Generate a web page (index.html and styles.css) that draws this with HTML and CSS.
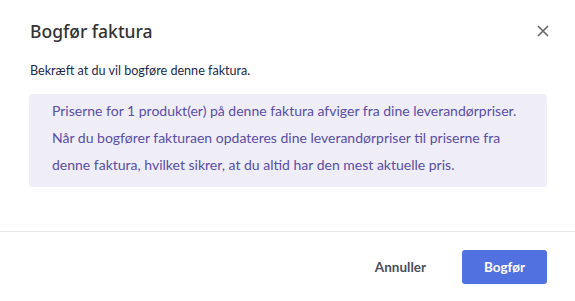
FILE: index.html
```html
<!DOCTYPE html>
<html lang="da">
<head>
<meta charset="utf-8">
<link rel="stylesheet" href="styles.css">
</head>
<body>
<div class="dialog">
  <div class="header">
    <h1 class="title">Bogfør faktura</h1>
    <button class="close" aria-label="Luk">
      <svg width="12" height="12" viewBox="0 0 12 12"><path d="M1 1L11 11M11 1L1 11" stroke="#666" stroke-width="1.6" fill="none"/></svg>
    </button>
  </div>
  <div class="body">
    <p class="lead">Bekræft at du vil bogføre denne faktura.</p>
    <div class="notice">
      Priserne for 1 produkt(er) på denne faktura afviger fra dine leverandørpriser.<br>
      Når du bogfører fakturaen opdateres dine leverandørpriser til priserne fra<br>
      denne faktura, hvilket sikrer, at du altid har den mest aktuelle pris.
    </div>
  </div>
  <div class="footer">
    <button class="btn btn-text">Annuller</button>
    <button class="btn btn-primary">Bogfør</button>
  </div>
</div>
</body>
</html>
```

FILE: styles.css
```css
* { box-sizing: border-box; }
html, body { margin: 0; padding: 0; background: #fff; }
body { font-family: "Lato", "Noto Sans", sans-serif; }
.dialog { width: 575px; height: 301px; display: flex; flex-direction: column; }
.header { display: flex; align-items: center; justify-content: space-between; padding: 18px 26px 0 30px; height: 44px; }
.title { margin: 0; font-family: "Noto Sans", sans-serif; font-size: 17.5px; font-weight: 500; color: #333; line-height: 24px; }
.close { background: none; border: 0; padding: 0; width: 12px; height: 12px; display: flex; cursor: pointer; }
.body { padding: 18px 28px 0 29px; flex: 1; }
.lead { margin: 0 0 14px 1px; font-size: 12.6px; color: #1d2a4d; line-height: 18px; }
.notice { background: #efedf8; border-radius: 4px; padding: 3px 10px 9px 23px; font-size: 14px; line-height: 27px; color: #5a4ea6; }
.footer { border-top: 1px solid #e6e6ea; height: 70px; display: flex; align-items: center; justify-content: flex-end; padding: 0 28px 0 0; }
.btn { font-family: inherit; font-size: 13.5px; font-weight: 700; border: 0; cursor: pointer; height: 34px; border-radius: 3px; }
.btn-text { background: none; color: #4b4f5c; padding: 0 36px 0 35px; }
.btn-primary { background: #5271e0; color: #fff; width: 85px; }
```
